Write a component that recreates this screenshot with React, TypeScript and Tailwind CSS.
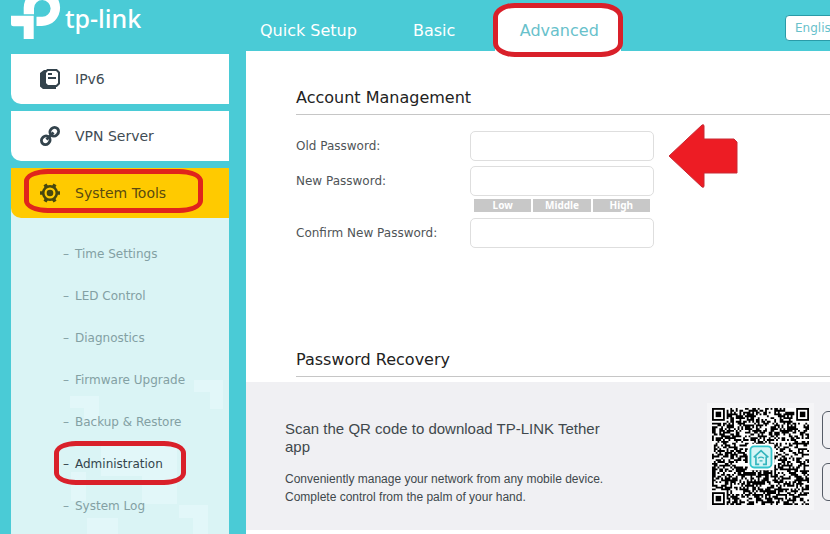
import type { ReactNode } from 'react';

const subItems = [
  'Time Settings',
  'LED Control',
  'Diagnostics',
  'Firmware Upgrade',
  'Backup & Restore',
  'Administration',
  'System Log',
];

const levels = ['Low', 'Middle', 'High'];

const LogoMark = () => (
  <svg width="50" height="40" viewBox="0 0 50 40" fill="#fff" aria-hidden="true">
    <path d="M12.7 14.3V8a18.2 18.2 0 1 1 18.2 18H25.500V16.700H30.900A8.300 8.300 0 1 0 23 8.500V14.300Z" />
    <path d="M0 15.700H22.700V39H12.700V26.300H2.500A2.500 2.500 0 0 1 0 23.800Z" />
  </svg>
);

const PagesIcon = () => (
  <svg width="20" height="20" viewBox="0 0 20 20" aria-hidden="true">
    <path d="M4 1H8V17H16V20H3L0 17.500V4Z" fill="#33434c" />
    <path
      d="M7.500 1H16.500L19 3.500V14.500L16.500 17H7.500L5 14.500V3.500Z"
      fill="#fff"
      stroke="#33434c"
      strokeWidth="2"
    />
    <path d="M8 5H12M8 9H16" stroke="#33434c" strokeWidth="2" />
  </svg>
);

const LinkIcon = () => (
  <svg width="20" height="20" viewBox="0 0 20 20" fill="none" stroke="#33434c" aria-hidden="true">
    <g transform="rotate(-45 10 10)" strokeWidth="2.800">
      <rect x="-0.500" y="6" width="9" height="8" rx="4" />
      <rect x="11.500" y="6" width="9" height="8" rx="4" />
      <path d="M5 10H15" />
    </g>
  </svg>
);

const GearIcon = () => (
  <svg width="20" height="20" viewBox="0 0 20 20" aria-hidden="true">
    <g stroke="#47480f" strokeWidth="3.500">
      <path d="M0 10H20" />
      <path d="M0 10H20" transform="rotate(60 10 10)" />
      <path d="M0 10H20" transform="rotate(120 10 10)" />
    </g>
    <circle cx="10" cy="10" r="6.800" fill="#ffca00" stroke="#47480f" strokeWidth="2.600" />
    <circle cx="10" cy="10" r="3.300" fill="#47480f" />
  </svg>
);

const QR_SIZE = 53;

const isFinder = (x: number, y: number) =>
  (x < 8 && y < 8) || (x > QR_SIZE - 9 && y < 8) || (x < 8 && y > QR_SIZE - 9);

const isDark = (x: number, y: number) => {
  let h = Math.imul(x + 17, 374761393) ^ Math.imul(y + 31, 668265263);
  h = Math.imul(h ^ (h >>> 13), 1274126177);
  h = Math.imul(h ^ (h >>> 15), 2246822519);
  return ((h ^ (h >>> 16)) & 255) < 136;
};

const buildModules = () => {
  let path = '';
  for (let y = 0; y < QR_SIZE; y++) {
    for (let x = 0; x < QR_SIZE; x++) {
      if (!isFinder(x, y) && isDark(x, y)) path += `M${x} ${y}h1v1h-1z`;
    }
  }
  return path;
};

const modules = buildModules();

const Finder = ({ x, y }: { x: number; y: number }) => (
  <g>
    <rect x={x} y={y} width="7" height="7" fill="#000" />
    <rect x={x + 1} y={y + 1} width="5" height="5" fill="#fff" />
    <rect x={x + 2} y={y + 2} width="3" height="3" fill="#000" />
  </g>
);

const QrCode = () => (
  <svg className="h-[97px] w-[97px]" viewBox="0 0 53 53" role="img" aria-label="Tether app QR code">
    <rect width="53" height="53" fill="#fff" />
    <path d={modules} fill="#000" />
    <Finder x={0} y={0} />
    <Finder x={46} y={0} />
    <Finder x={0} y={46} />
    <rect x="19.500" y="19.500" width="14.500" height="14.500" rx="1" fill="#fff" />
    <rect x="21" y="21" width="11.500" height="11.500" rx="2" fill="#d5f5f6" stroke="#35c5cc" />
    <path
      d="M22.800 27L26.800 23.300L30.800 27M24 26.500V30.800H25.800M27.800 30.800H29.600V26.500"
      fill="none"
      stroke="#35b5bd"
      strokeWidth="0.900"
    />
    <path d="M25.200 27.500Q26.800 26.200 28.400 27.500M26 28.900H27.600" fill="none" stroke="#35b5bd" strokeWidth="0.700" />
  </svg>
);

// faint corner arrows behind the submenu
const MenuPattern = () => (
  <svg
    className="absolute bottom-0 left-0 h-[154px] w-full"
    viewBox="0 0 218 154"
    preserveAspectRatio="xMinYMax slice"
    fill="#e2f7f9"
    aria-hidden="true"
  >
    <path d="M183 0H212V29H199V12H183Z" />
    <path d="M59 16H88V45H73V28H59Z" />
    <path d="M90 60H166V124H131V96H90Z" />
    <path d="M60 92H75V121H60Z" />
    <path d="M168 125H197V154H182V138H168Z" />
    <path d="M76 138H107V154H76Z" />
  </svg>
);

const MenuItem = ({ icon, label, active }: { icon: ReactNode; label: string; active?: boolean }) => (
  <a
    href="#"
    className={
      'flex h-[50px] items-center gap-[15px] rounded-bl-[10px] pl-[29px] text-sm ' +
      (active ? 'bg-[#ffca00] text-[#5a4b10]' : 'bg-white text-[#3f4c54]')
    }
  >
    {icon}
    {label}
  </a>
);

const Sidebar = () => (
  <aside className="mr-[17px] ml-[11px] flex w-[218px] shrink-0 flex-col">
    <a href="#" className="flex h-[54px] items-start gap-1 text-white">
      <LogoMark />
      <span className="font-['Noto_Sans'] text-[25px] leading-9 font-medium">tp-link</span>
    </a>
    <nav className="flex flex-1 flex-col">
      <div className="flex flex-col gap-[7px]">
        <MenuItem icon={<PagesIcon />} label="IPv6" />
        <MenuItem icon={<LinkIcon />} label="VPN Server" />
        <div className="relative bg-[#daf4f5]">
          <MenuItem icon={<GearIcon />} label="System Tools" active />
          <div className="pointer-events-none absolute top-px left-[13px] h-11 w-[179px] rounded-[24px/12px] border-5 border-[#e0241c]" />
        </div>
      </div>
      <ul className="relative flex-1 bg-[#daf4f5] pt-[15px]">
        <MenuPattern />
        {subItems.map((item) => (
          <li key={item} className="relative">
            <a
              href="#"
              className={
                'flex h-[42px] items-center pl-[52px] text-xs ' +
                (item === 'Administration' ? 'text-[#33454c]' : 'text-[#83a0a3]')
              }
            >
              <span className="w-3">–</span>
              {item}
            </a>
            {item === 'Administration' && (
              <div className="pointer-events-none absolute -top-[2px] left-[43px] h-11 w-[132px] rounded-[22px/12px] border-5 border-[#d9202a]" />
            )}
          </li>
        ))}
      </ul>
    </nav>
  </aside>
);

const Header = () => (
  <header className="flex h-[51px] shrink-0 items-stretch text-base text-white">
    <a href="#" className="flex items-center px-[14px] pt-[10px]">
      Quick Setup
    </a>
    <a href="#" className="ml-7 flex items-center px-[14px] pt-[10px]">
      Basic
    </a>
    <div className="relative ml-[26px] w-[126px] shrink-0 pt-[5px]">
      <a
        href="#"
        className="flex h-full items-center justify-center rounded-t-[12px] bg-white pt-[5px] pl-[2px] text-[#68c1cb]"
      >
        Advanced
      </a>
      <div className="pointer-events-none absolute top-[3px] -left-[2px] h-[54px] w-[130px] rounded-[22px/14px] border-5 border-[#d9202a]" />
    </div>
    <select
      aria-label="Language"
      className="mt-[15px] -mr-[15px] ml-auto h-[26px] w-[60px] shrink-0 appearance-none rounded border border-[#2a9ba8] bg-white pl-[9px] text-xs text-[#68c1cb]"
    >
      <option>English</option>
    </select>
  </header>
);

const Field = ({ id, label }: { id: string; label: string }) => (
  <div className="flex items-center">
    <label htmlFor={id} className="w-[174px] shrink-0">
      {label}
    </label>
    <input id={id} type="password" className="h-[30px] w-[184px] rounded-[5px] border border-[#dedede] bg-white px-2" />
  </div>
);

const AccountForm = () => (
  <form className="relative mt-4 flex flex-col gap-[5px] text-xs text-[#4f5457]">
    <Field id="old-password" label="Old Password:" />
    <Field id="new-password" label="New Password:" />
    <div className="-mt-[2px] mb-px ml-[178px] grid h-[13px] w-[176px] grid-cols-3 gap-[2px] text-center font-['Noto_Sans'] text-[10px] leading-[13px] font-bold text-white">
      {levels.map((level) => (
        <span key={level} className="bg-[#c8c8c8]">
          {level}
        </span>
      ))}
    </div>
    <Field id="confirm-password" label="Confirm New Password:" />
    <svg
      className="absolute -top-[7px] left-[372px]"
      width="70"
      height="66"
      viewBox="0 0 70 66"
      fill="#ed1c24"
      stroke="#c92a35"
      aria-hidden="true"
    >
      <path d="M1 32L34 1Q36 0 36 2V15H66L69 18V49H36V62Q36 64 34 63Z" />
    </svg>
  </form>
);

const Promo = () => (
  <section className="flex h-[148px] shrink-0 items-start bg-[#f0f0f3] font-['Liberation_Sans'] text-[#40484c]">
    <div className="ml-[39px] w-[330px] shrink-0 pt-[38px]">
      <h3 className="text-[15px] leading-[18px]">Scan the QR code to download TP-LINK Tether app</h3>
      <p className="mt-[14px] text-xs leading-[18px]">
        Conveniently manage your network from any mobile device. Complete control from the palm of your hand.
      </p>
    </div>
    <div className="mt-[21px] ml-[92px] shrink-0 bg-[#f5f5f7] p-[5px]">
      <QrCode />
    </div>
    <div className="mt-[29px] ml-2 flex shrink-0 flex-col gap-[14px]">
      <button aria-label="App Store" className="h-[38px] w-[120px] rounded-md border border-[#555b66]" />
      <button aria-label="Google Play" className="h-[38px] w-[120px] rounded-md border border-[#555b66]" />
    </div>
  </section>
);

const App = () => {
  return (
    <div className="flex min-h-screen overflow-hidden bg-[#4acbd6] font-['DejaVu_Sans',sans-serif]">
      <Sidebar />
      <div className="flex min-w-0 flex-1 flex-col">
        <Header />
        <main className="flex-1 bg-white">
          <div className="flex flex-col pl-[50px]">
            <h2 className="border-b border-[#c6c6c6] pt-[35px] pb-1 text-base text-[#222]">Account Management</h2>
            <AccountForm />
            <h2 className="mt-[100px] border-b border-[#c6c6c6] pb-1 text-base text-[#222]">Password Recovery</h2>
          </div>
          <div className="mt-[5px]">
            <Promo />
          </div>
        </main>
      </div>
    </div>
  );
};

export default App;
